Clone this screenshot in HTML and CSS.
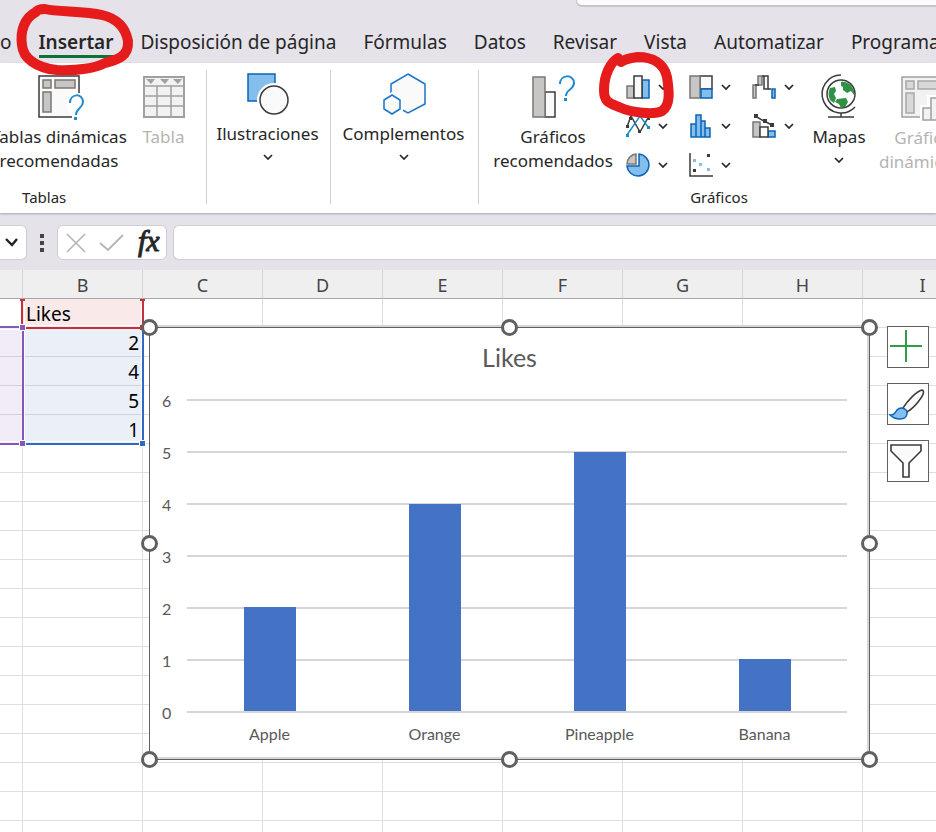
FILE: index.html
```html
<!DOCTYPE html>
<html lang="es">
<head>
<meta charset="utf-8">
<meta name="viewport" content="width=device-width, initial-scale=1">
<title>Libro de Excel</title>
<link rel="stylesheet" href="styles.css">
</head>
<body>
<svg class="defs" aria-hidden="true">
  <symbol id="chev" viewBox="0 0 10 6"><path d="M1 1l4 4 4-4" fill="none" stroke="currentColor" stroke-width="1.7"/></symbol>
</svg>

<header class="top">
  <input class="search" type="text" aria-label="Buscar">
  <nav class="tabs">
    <a class="tab" href="#">o</a>
    <a class="tab active" href="#">Insertar
      <svg class="mark mark-tab" viewBox="0 0 120 78" aria-hidden="true"><path d="M24 12C12 18 8 32 10 45C11 58 24 68 45 70C65 71 84 68 93 63C103 60 117 58 116 41C113 25 103 18 90 15C72 11 45 12 33 9C27 9 25 10 24 12"/></svg>
    </a>
    <a class="tab" href="#">Disposición de página</a>
    <a class="tab" href="#">Fórmulas</a>
    <a class="tab" href="#">Datos</a>
    <a class="tab" href="#">Revisar</a>
    <a class="tab" href="#">Vista</a>
    <a class="tab" href="#">Automatizar</a>
    <a class="tab" href="#">Programador</a>
  </nav>
</header>

<section class="ribbon" aria-label="Insertar">
  <div class="group tables">
    <div class="tools">
      <button class="tool pivot" type="button">
        <svg width="46" height="46" viewBox="0 0 46 46"><path d="M36 43H3V2h40v17" fill="#fafafa" stroke="#3b3b3b" stroke-width="1.5"/><g fill="#c8c6c4" stroke="#797774" stroke-width="1.5"><path d="M7 6h8v8H7zM19 6h20v8H19zM7 18h8v20H7z"/></g><circle cx="41" cy="31" r="11" fill="#fff"/><path d="M34 29c0-10 13-10 13-1 0 6-7 6-7 13" fill="none" stroke="#1e8bcd" stroke-width="2"/><path d="M38 43h3v3h-3z" fill="#1e8bcd"/></svg>
        <span>Tablas dinámicas<br>recomendadas</span>
      </button>
      <button class="tool table-tool" type="button" disabled>
        <svg width="46" height="46" viewBox="0 0 46 46"><path d="M3 3h40v40H3z" fill="#f2f2f2" stroke="#a0a0a0" stroke-width="2"/><path d="M3 12h40M3 22h40M3 32h40M16 12v31M30 12v31" stroke="#a0a0a0" stroke-width="1.5"/><path d="M5 5h9l-4 5zM19 5h9l-4 5zM32 5h9l-4 5z" fill="#a0a0a0"/></svg>
        <span>Tabla</span>
      </button>
    </div>
    <div class="caption">Tablas</div>
  </div>

  <div class="group illus">
    <button class="tool high" type="button">
      <svg width="46" height="46" viewBox="0 0 46 46"><path d="M3 3h27v27H3z" fill="#83beec" stroke="#0a64b7" stroke-width="1.5"/><circle cx="29" cy="29" r="17" fill="#fff"/><circle cx="29" cy="29" r="14" fill="#fafafa" stroke="#3b3b3b" stroke-width="1.5"/></svg>
      <span>Ilustraciones</span>
      <svg class="chev" width="10" height="6"><use href="#chev"/></svg>
    </button>
  </div>

  <div class="group addins">
    <button class="tool high" type="button">
      <svg width="46" height="46" viewBox="0 0 46 46"><path d="M27 3l17 10v20L27 42 10 33V13z" fill="#fafafa" stroke="#1a75c7" stroke-width="1.5"/><path d="M11 21l11 6v13l-11 6-11-6V27z" fill="#fff"/><path d="M11 24l8 5v9l-8 5-8-5v-9z" fill="#fafafa" stroke="#1a75c7" stroke-width="1.5"/></svg>
      <span>Complementos</span>
      <svg class="chev" width="10" height="6"><use href="#chev"/></svg>
    </button>
  </div>

  <div class="group charts">
    <div class="tools">
      <button class="tool recommended" type="button">
        <svg width="46" height="46" viewBox="0 0 46 46"><path d="M15 18h10v25H15z" fill="#fafafa" stroke="#3b3b3b" stroke-width="1.5"/><path d="M3 3h12v40H3z" fill="#c8c6c4" stroke="#797774" stroke-width="1.5"/><path d="M30 10c0-10 14-10 14-1 0 7-8 6-8 13" fill="none" stroke="#1e8bcd" stroke-width="2"/><path d="M34 24h3v3h-3z" fill="#1e8bcd"/></svg>
        <span>Gráficos<br>recomendados</span>
      </button>
      <div class="gallery">
        <button class="mini" type="button" aria-label="Columnas">
          <svg width="26" height="26" viewBox="0 0 26 26"><g stroke-width="1.5"><path d="M2 12h7v12H2z" fill="#c8c6c4" stroke="#797774"/><path d="M17 6h7v18h-7z" fill="#83beec" stroke="#0a64b7"/><path d="M9 2h8v22H9z" fill="#fafafa" stroke="#3b3b3b"/></g></svg>
          <svg class="chev" width="10" height="6"><use href="#chev"/></svg>
          <svg class="mark mark-chart" viewBox="0 0 80 68" aria-hidden="true"><path d="M24 8C17 12 10 24 10 40C10 52 15 53 25 57C38 63 60 65 68 61C77 55 75 40 73 27C70 13 58 7 44 7C36 8 31 9 27 12"/></svg>
        </button>
        <button class="mini" type="button" aria-label="Jerarquía">
          <svg width="26" height="26" viewBox="0 0 26 26"><g stroke-width="1.5"><path d="M12 2h12v13H12z" fill="#fafafa" stroke="#3b3b3b"/><path d="M2 2h10v22H2z" fill="#c8c6c4" stroke="#797774"/><path d="M13 15h11v9H13z" fill="#83beec" stroke="#0a64b7"/></g></svg>
          <svg class="chev" width="10" height="6"><use href="#chev"/></svg>
        </button>
        <button class="mini" type="button" aria-label="Cascada">
          <svg width="26" height="26" viewBox="0 0 26 26"><g stroke-width="1.5"><path d="M2 11h3v13H2zM7 2h4v9H7z" fill="#c8c6c4" stroke="#797774"/><path d="M13 2h4v13h-4z" fill="#fafafa" stroke="#3b3b3b"/><path d="M11 2h2M4 11h4M17 15h3" stroke="#3b3b3b"/><path d="M21 15h3v9h-3z" fill="#83beec" stroke="#0a64b7"/></g></svg>
          <svg class="chev" width="10" height="6"><use href="#chev"/></svg>
        </button>
        <button class="mini" type="button" aria-label="Líneas">
          <svg width="26" height="26" viewBox="0 0 26 26"><path d="M2 14L6 3l9 16 9-16" fill="none" stroke="#3b3b3b" stroke-width="1.5"/><path d="M2 22L15 3l8 11" fill="none" stroke="#1e8bcd" stroke-width="1.5"/><path d="M1 12h3v3H1zM4 4h3v3H4zM13 17h3v3h-3zM22 4h3v3h-3z" fill="#3b3b3b"/><path d="M1 21h3v3H1zM22 13h3v3h-3z" fill="#1e8bcd"/></svg>
          <svg class="chev" width="10" height="6"><use href="#chev"/></svg>
        </button>
        <button class="mini" type="button" aria-label="Estadístico">
          <svg width="26" height="26" viewBox="0 0 26 26"><g fill="#83beec" stroke="#0a64b7" stroke-width="1.5"><path d="M3 11h5v13H3zM8 2h5v22H8zM13 8h4v16h-4zM17 15h5v9h-5z"/></g></svg>
          <svg class="chev" width="10" height="6"><use href="#chev"/></svg>
        </button>
        <button class="mini" type="button" aria-label="Combinado">
          <svg width="26" height="26" viewBox="0 0 26 26"><g stroke-width="1.5"><path d="M2 9h7v15H2z" fill="#c8c6c4" stroke="#797774"/><path d="M17 18h7v6h-7z" fill="#83beec" stroke="#0a64b7"/><path d="M9 14h8v10H9z" fill="#fafafa" stroke="#3b3b3b"/><path d="M4 3l9 5 8 4" fill="none" stroke="#3b3b3b"/></g><path d="M3 1h4v4H3zM12 6h4v4h-4zM19 10h4v4h-4z" fill="#3b3b3b"/></svg>
          <svg class="chev" width="10" height="6"><use href="#chev"/></svg>
        </button>
        <button class="mini" type="button" aria-label="Circular">
          <svg width="26" height="26" viewBox="0 0 26 26"><path d="M14 2a11 11 0 1 1-12 12h12z" fill="#83beec" stroke="#0a64b7" stroke-width="1.5"/><path d="M11 12H2A10 10 0 0 1 11 2z" fill="#c8c6c4" stroke="#797774" stroke-width="1.5"/></svg>
          <svg class="chev" width="10" height="6"><use href="#chev"/></svg>
        </button>
        <button class="mini" type="button" aria-label="Dispersión">
          <svg width="26" height="26" viewBox="0 0 26 26"><path d="M2 1v23h23" fill="none" stroke="#3b3b3b" stroke-width="1.5"/><path d="M5 17h3v3H5zM19 2h3v3h-3z" fill="#3b3b3b"/><path d="M5 7h3v3H5zM11 11h3v3h-3zM19 16h3v3h-3z" fill="#83beec"/></svg>
          <svg class="chev" width="10" height="6"><use href="#chev"/></svg>
        </button>
      </div>
      <button class="tool maps" type="button">
        <svg width="46" height="46" viewBox="0 0 46 46"><circle cx="25" cy="20" r="14" fill="#fff" stroke="#3b3b3b" stroke-width="1.5"/><g fill="#2f9145"><path d="M25 8c6-1 11 3 13 9v4l-3-4-4 2-4-3v-3l-2-1z"/><path d="M14 14l5-1 1 4-2 3 2 4-2 5-3-2c-3-4-3-9-1-13z"/><path d="M21 25l9-1 2 4-3 5-4 1-2-4-4-2z"/></g><path d="M25 1A19 19 0 1 0 39 33M25 39v4M12 43h26" fill="none" stroke="#3b3b3b" stroke-width="1.5"/></svg>
        <span>Mapas</span>
        <svg class="chev" width="10" height="6"><use href="#chev"/></svg>
      </button>
      <button class="tool pivot-chart" type="button" disabled>
        <svg width="46" height="46" viewBox="0 0 46 46"><path d="M2 2h42v40H2z" fill="#f2f2f2" stroke="#a0a0a0" stroke-width="1.5"/><g fill="#d8d8d8" stroke="#a8a8a8" stroke-width="1.5"><path d="M6 6h8v8H6zM18 6h26v8H18zM6 18h8v20H6z"/></g><path d="M20 30h7V20h19v26H20z" fill="#fff"/><g fill="#f2f2f2" stroke="#a0a0a0" stroke-width="1.5"><path d="M23 33h8v12h-8zM31 23h9v22h-9z"/></g></svg>
        <span>Gráfico<br>dinámico <svg class="inline-chev" width="10" height="6"><use href="#chev"/></svg></span>
      </button>
    </div>
    <div class="caption">Gráficos</div>
  </div>
</section>

<div class="formula-bar">
  <button class="name-box" type="button" aria-label="Cuadro de nombres"><svg width="14" height="9" viewBox="0 0 14 9"><path d="M2 1l6 6 5-6" fill="none" stroke="#222" stroke-width="2.4"/></svg></button>
  <svg class="dots" width="4" height="18" viewBox="0 0 4 18"><path d="M0 0h4v4H0zM0 7h4v4H0zM0 14h4v4H0z" fill="#444"/></svg>
  <div class="actions">
    <button type="button" aria-label="Cancelar"><svg width="20" height="20" viewBox="0 0 20 20"><path d="M1 1l18 18M19 1L1 19" stroke="#b4b4b4" stroke-width="1.6"/></svg></button>
    <button type="button" aria-label="Introducir"><svg width="26" height="20" viewBox="0 0 26 20"><path d="M1 10l8 7L24 2" fill="none" stroke="#b4b4b4" stroke-width="1.8"/></svg></button>
    <button class="fx" type="button">fx</button>
  </div>
  <input class="formula" type="text" aria-label="Barra de fórmulas">
</div>

<main class="sheet">
  <table class="grid">
    <colgroup><col class="col-a"><col span="8"></colgroup>
    <thead><tr><th></th><th>B</th><th>C</th><th>D</th><th>E</th><th>F</th><th>G</th><th>H</th><th>I</th></tr></thead>
    <tbody>
      <tr><td></td><td class="series">Likes</td><td></td><td></td><td></td><td></td><td></td><td></td><td></td></tr>
      <tr><td class="cat"></td><td class="val">2</td><td></td><td></td><td></td><td></td><td></td><td></td><td></td></tr>
      <tr><td class="cat"></td><td class="val">4</td><td></td><td></td><td></td><td></td><td></td><td></td><td></td></tr>
      <tr><td class="cat"></td><td class="val">5</td><td></td><td></td><td></td><td></td><td></td><td></td><td></td></tr>
      <tr><td class="cat"></td><td class="val">1</td><td></td><td></td><td></td><td></td><td></td><td></td><td></td></tr>
      <tr><td></td><td></td><td></td><td></td><td></td><td></td><td></td><td></td><td></td></tr>
      <tr><td></td><td></td><td></td><td></td><td></td><td></td><td></td><td></td><td></td></tr>
      <tr><td></td><td></td><td></td><td></td><td></td><td></td><td></td><td></td><td></td></tr>
      <tr><td></td><td></td><td></td><td></td><td></td><td></td><td></td><td></td><td></td></tr>
      <tr><td></td><td></td><td></td><td></td><td></td><td></td><td></td><td></td><td></td></tr>
      <tr><td></td><td></td><td></td><td></td><td></td><td></td><td></td><td></td><td></td></tr>
      <tr><td></td><td></td><td></td><td></td><td></td><td></td><td></td><td></td><td></td></tr>
      <tr><td></td><td></td><td></td><td></td><td></td><td></td><td></td><td></td><td></td></tr>
      <tr><td></td><td></td><td></td><td></td><td></td><td></td><td></td><td></td><td></td></tr>
      <tr><td></td><td></td><td></td><td></td><td></td><td></td><td></td><td></td><td></td></tr>
      <tr><td></td><td></td><td></td><td></td><td></td><td></td><td></td><td></td><td></td></tr>
      <tr><td></td><td></td><td></td><td></td><td></td><td></td><td></td><td></td><td></td></tr>
      <tr><td></td><td></td><td></td><td></td><td></td><td></td><td></td><td></td><td></td></tr>
      <tr><td></td><td></td><td></td><td></td><td></td><td></td><td></td><td></td><td></td></tr>
    </tbody>
  </table>

  <svg class="ranges" width="150" height="60" viewBox="0 0 150 60" aria-hidden="true">
    <path d="M24.5 30V55.5H141.5V30" fill="none" stroke="#fff"/>
    <path d="M22 30V58H143V30" fill="none" stroke="#c4313b" stroke-width="2"/>
    <path d="M20 29h5v2h-5zM140 29h5v2h-5zM140 55h5v5h-5z" fill="#c4313b"/>
  </svg>
  <svg class="ranges lower" width="150" height="124" viewBox="0 0 150 124" aria-hidden="true">
    <path d="M0 5.5H20M24.5 6V117.5H141.5V6M0 117.5H20" fill="none" stroke="#fff"/>
    <path d="M143 6V120H23" fill="none" stroke="#3068c4" stroke-width="2"/>
    <path d="M0 3H22M23 3V120M0 120H22" fill="none" stroke="#8457b8" stroke-width="2"/>
    <g stroke="#fff"><path d="M19.5.5h6v6h-6zM19.5 116.5h6v6h-6z" fill="#8457b8"/><path d="M139.5 116.5h6v6h-6z" fill="#3068c4"/></g>
  </svg>

  <section class="chart" aria-label="Gráfico Likes">
    <h2>Likes</h2>
    <div class="plot">
      <ol class="axis"><li>6</li><li>5</li><li>4</li><li>3</li><li>2</li><li>1</li><li>0</li></ol>
      <div class="bars">
        <div class="bar" style="height:33.333%"></div>
        <div class="bar" style="height:66.667%"></div>
        <div class="bar" style="height:83.333%"></div>
        <div class="bar" style="height:16.667%"></div>
      </div>
    </div>
    <div class="labels"><span>Apple</span><span>Orange</span><span>Pineapple</span><span>Banana</span></div>
    <i class="handle n w"></i><i class="handle n c"></i><i class="handle n e"></i>
    <i class="handle m w"></i><i class="handle m e"></i>
    <i class="handle s w"></i><i class="handle s c"></i><i class="handle s e"></i>
    <div class="chart-tools">
      <button type="button" aria-label="Elementos de gráfico"><svg width="40" height="40" viewBox="1 0 40 40"><path d="M19 3v32M3 19h32" stroke="#2f9e49" stroke-width="2"/></svg></button>
      <button type="button" aria-label="Estilos de gráfico"><svg width="40" height="40" viewBox="0 0 40 40"><path d="M15 24C20 16 29 7 34 6c3 1 1 5-1 8-4 6-9 11-14 14z" fill="#fafafa" stroke="#3b3b3b" stroke-width="1.5"/><path d="M2 31c4 0 5-2 7-5 4-4 11-1 10 4-1 7-12 6-17 1z" fill="#83beec" stroke="#0a64b7" stroke-width="1.5"/></svg></button>
      <button type="button" aria-label="Filtros de gráfico"><svg width="40" height="40" viewBox="1 0 40 40"><path d="M4 4h30v6L22 22v14h-6V22L4 10z" fill="#fafafa" stroke="#3b3b3b" stroke-width="1.6"/></svg></button>
    </div>
  </section>
</main>
</body>
</html>
```
FILE: styles.css
```css
* { box-sizing: border-box; }

body {
  margin: 0;
  min-height: 100vh;
  overflow: hidden;
  display: flex;
  flex-direction: column;
  background: #e5e2ea;
  color: #262626;
  font-family: "Noto Sans", "Open Sans", sans-serif;
  font-size: 17px;
}

button {
  padding: 0;
  border: 0;
  background: none;
  color: inherit;
  font: inherit;
}

svg { display: block; }
.defs { display: none; }

/* Title area and tabs */
.top {
  display: flex;
  flex-direction: column;
  height: 63px;
}

.search {
  flex: none;
  align-self: flex-end;
  width: calc(100% - 576px);
  height: 7px;
  padding: 0;
  border: 1px solid #c6c3ca;
  border-width: 0 0 2px 1px;
  border-radius: 0 0 0 6px;
  background: #fbfbfb;
}

.tabs {
  display: flex;
  gap: 27px;
  padding-top: 22px;
  white-space: nowrap;
}

.tab {
  color: #262626;
  font-size: 19px;
  line-height: 26px;
  text-decoration: none;
}

.tab.active {
  position: relative;
  height: 29px;
  border-bottom: 3px solid #0f7038;
  font-weight: 600;
}

.mark {
  position: absolute;
  z-index: 3;
  overflow: visible;
  fill: none;
  stroke: #e61c1c;
  stroke-width: 10;
  stroke-linejoin: round;
  stroke-linecap: round;
  pointer-events: none;
}

.mark-tab {
  top: -29px;
  left: -27px;
  width: 120px;
  height: 78px;
}

/* Ribbon */
.ribbon {
  display: flex;
  flex: none;
  height: 150px;
  padding-top: 7px;
  background: #fff;
  box-shadow: 0 1px 2px #aaa6ae;
}

.group {
  display: flex;
  flex: none;
  flex-direction: column;
  height: 134px;
  border-right: 1px solid #d0d0d0;
}

.tables { width: 207px; }
.illus { width: 124px; }
.addins { width: 148px; }
.charts { width: 490px; border-right: 0; }

.tools {
  display: flex;
  flex: none;
  height: 114px;
}

.tool {
  display: flex;
  flex: none;
  flex-direction: column;
  align-items: center;
  padding-top: 4px;
  line-height: 24px;
  white-space: nowrap;
}

.tool > svg { overflow: visible; }
.tool span { margin-top: 5px; }
.tool .chev { margin-top: 8px; }
.tool.high { padding: 1px 2px 0 0; }
.tool:disabled { color: #b4b4b4; }

.pivot { width: 140px; margin-left: -11px; }
.table-tool { width: 69px; }
.recommended { width: 146px; padding-left: 2px; }
.maps { width: 76px; }
.pivot-chart { width: 92px; padding-top: 5px; }
.inline-chev { display: inline-block; vertical-align: middle; }

.caption {
  padding: 0 22px;
  font-size: 15px;
  line-height: 26px;
}

.charts .caption { text-align: center; padding: 0 10px 0 0; }

.gallery {
  display: grid;
  grid-template-columns: repeat(3, 63px);
  grid-auto-rows: 39px;
  align-content: start;
  width: 176px;
}

.mini {
  position: relative;
  display: flex;
  align-items: center;
  gap: 7px;
  height: 34px;
}

.mark-chart {
  top: -20px;
  left: -31px;
  width: 80px;
  height: 68px;
}

/* Formula bar */
.formula-bar {
  display: flex;
  flex: none;
  align-items: center;
  height: 57px;
  padding-top: 2px;
}

.name-box,
.actions,
.formula {
  height: 35px;
  border: 1px solid #d0cdd4;
  border-radius: 6px;
  background: #fff;
}

.name-box {
  width: 27px;
  padding-left: 4px;
  border-left: 0;
  border-radius: 0 6px 6px 0;
}

.dots { margin: 0 13px; }

.actions {
  display: flex;
  align-items: center;
  gap: 13px;
  width: 110px;
  padding-left: 8px;
}

.fx {
  font: italic 30px/30px "Liberation Serif", serif;
  padding-bottom: 3px;
  -webkit-text-stroke: 1px;
}

.formula {
  flex: 1;
  margin-left: 6px;
  border-right: 0;
  border-radius: 6px 0 0 6px;
}

/* Worksheet */
.sheet {
  position: relative;
  flex: 1;
  overflow: hidden;
  background: #fff;
}

.grid {
  width: 983px;
  table-layout: fixed;
  border-collapse: separate;
  border-spacing: 0;
}

.grid col { width: 120px; }
.grid .col-a { width: 23px; }

.grid th {
  height: 29px;
  padding: 3px 0 0;
  border-right: 1px solid #d4d4d4;
  border-bottom: 1px solid #a6a6a6;
  background: #efefef;
  color: #444;
  font-size: 18px;
  font-weight: 400;
  line-height: 25px;
}

.grid td {
  height: 29px;
  padding: 2px 3px 0 3px;
  border-right: 1px solid #dedede;
  border-bottom: 1px solid #dedede;
  color: #000;
  font-size: 19px;
  line-height: 26px;
}

.grid .series { background: #f9e9e9; }
.grid .cat { background: #f1ecf8; border-color: #d4d0da; }
.grid .val { background: #eaeff8; border-color: #ced2da; text-align: right; }

.ranges {
  position: absolute;
  top: 0;
  left: 0;
}

.ranges.lower { top: 54px; }

/* Chart */
.chart {
  position: absolute;
  top: 57px;
  left: 149px;
  width: 721px;
  height: 433px;
  border: 1px solid #606060;
  background: #fff;
  box-shadow: inset -2px 0 #d6d6d6, inset 0 -2px #d6d6d6, 0 -2px #d6d6d6;
  color: #595959;
  font-family: Lato, "Noto Sans", sans-serif;
}

.chart h2 {
  margin: 13px 0 0;
  font-size: 25px;
  font-weight: 400;
  line-height: 33px;
  text-align: center;
}

.plot {
  position: relative;
  margin: 0 22px 0 12px;
  height: 364px;
}

.axis {
  margin: 0;
  padding: 0;
  list-style: none;
}

.axis li {
  display: flex;
  align-items: center;
  gap: 16px;
  height: 52px;
  font-size: 16px;
}

.axis li::after {
  content: "";
  flex: 1;
  height: 2px;
  background: #d6d6d6;
}

.bars {
  position: absolute;
  inset: 26px 0 27px 25px;
  display: flex;
  align-items: flex-end;
  justify-content: space-around;
}

.bar {
  width: 52px;
  background: #4472c4;
}

.labels {
  display: flex;
  margin: -14px 22px 0 37px;
  font-size: 16px;
  line-height: 20px;
}

.labels span { flex: 1; text-align: center; }

.handle {
  position: absolute;
  width: 17px;
  height: 17px;
  border: 3px solid #606060;
  border-radius: 50%;
  background: #fff;
}

.n { top: -9px; }
.m { top: calc(50% - 9px); }
.s { bottom: -9px; }
.w { left: -9px; }
.c { left: calc(50% - 9px); }
.e { right: -9px; }

.chart-tools {
  position: absolute;
  top: -2px;
  left: 737px;
  display: grid;
  gap: 15px;
}

.chart-tools button {
  width: 42px;
  height: 42px;
  border: 1px solid #606060;
  background: #fff;
}
```
